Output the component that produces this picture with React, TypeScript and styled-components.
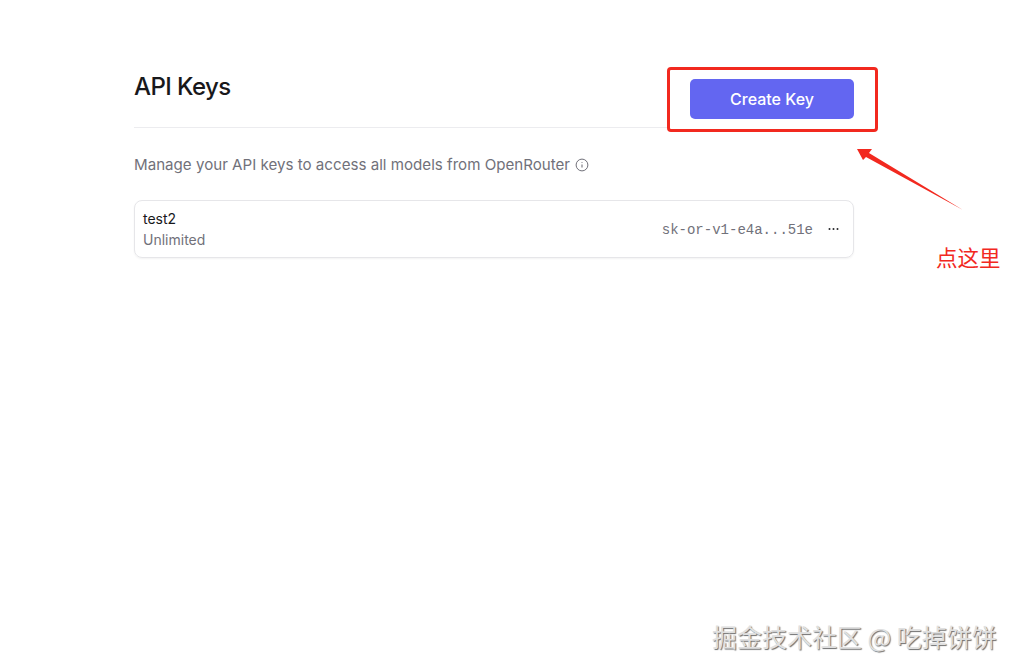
import styled, { createGlobalStyle } from "styled-components";

const GlobalStyle = createGlobalStyle`
  html, body {
    margin: 0;
    padding: 0;
    background: #ffffff;
  }
  body {
    font-family: Inter, "Noto Sans CJK SC", sans-serif;
    color: #18181b;
  }
`;

const Page = styled.div`
  position: relative;
  width: 1017px;
  height: 671px;
  overflow: hidden;
  padding: 79px 0 0 134px;
  box-sizing: border-box;
`;

const Content = styled.main`
  width: 720px;
`;

const Header = styled.header`
  display: flex;
  justify-content: space-between;
  align-items: flex-start;
  height: 48px;
`;

const Title = styled.h1`
  margin: 0;
  font-size: 24px;
  line-height: 16px;
  font-weight: 500;
  letter-spacing: -0.6px;
  color: #18181b;
`;

const CreateButton = styled.button`
  width: 164px;
  height: 40px;
  border: 0;
  border-radius: 5px;
  background: #6366f1;
  color: #ffffff;
  font-family: inherit;
  font-size: 16px;
  font-weight: 500;
`;

const Divider = styled.div`
  width: 533px;
  height: 1px;
  background: #ececef;
`;

const Description = styled.p`
  display: flex;
  align-items: center;
  gap: 5px;
  margin: 27px 0 0;
  font-size: 15.14px;
  line-height: 20px;
  color: #71717a;
`;

const KeyRow = styled.div`
  display: flex;
  justify-content: space-between;
  align-items: center;
  height: 58px;
  margin-top: 25px;
  padding: 0 14px 0 8px;
  box-sizing: border-box;
  border: 1px solid #e6e6e9;
  border-radius: 8px;
  box-shadow: 0 1px 2px rgba(0, 0, 0, 0.05);
`;

const KeyInfo = styled.div`
  display: flex;
  flex-direction: column;
  gap: 3px;
  padding-top: 1px;
`;

const KeyName = styled.div`
  font-size: 14px;
  line-height: 18px;
  color: #18181b;
`;

const KeyLimit = styled.div`
  font-size: 14px;
  line-height: 18px;
  color: #71717a;
`;

const KeyActions = styled.div`
  display: flex;
  align-items: center;
  gap: 15px;
`;

const KeyValue = styled.code`
  padding-top: 1px;
  font-family: "Liberation Mono", monospace;
  font-size: 14px;
  color: #71717a;
`;

const MoreIcon = styled.svg`
  display: block;
`;

const HighlightBox = styled.div`
  position: absolute;
  left: 667px;
  top: 67px;
  width: 211px;
  height: 65px;
  box-sizing: border-box;
  border: 3px solid #f2291f;
  border-radius: 4px;
`;

const ArrowDrawing = styled.svg`
  position: absolute;
  left: 850px;
  top: 140px;
`;

const Annotation = styled.div`
  position: absolute;
  left: 936px;
  top: 243px;
  font-family: "Noto Sans CJK SC", sans-serif;
  font-size: 21.5px;
  line-height: 28px;
  color: #f2291f;
`;

const Watermark = styled.div`
  position: absolute;
  left: 712px;
  top: 619px;
  font-family: "Noto Sans CJK SC", sans-serif;
  font-size: 25px;
  line-height: 34px;
  white-space: nowrap;
  color: #e0e0e0;
  text-shadow: 1px 1px 1px #6d6d6d;
`;

export default function App() {
  return (
    <Page>
      <GlobalStyle />
      <Content>
        <Header>
          <Title>API Keys</Title>
          <CreateButton type="button">Create Key</CreateButton>
        </Header>
        <Divider />
        <Description>
          Manage your API keys to access all models from OpenRouter
          <svg width="14" height="14" viewBox="0 0 14 14" fill="none" stroke="#71717a">
            <circle cx="7" cy="7" r="5.9" strokeWidth="1" />
            <path d="M7 6.4v3.2M7 4.2v.9" strokeWidth="1.1" />
          </svg>
        </Description>
        <KeyRow>
          <KeyInfo>
            <KeyName>test2</KeyName>
            <KeyLimit>Unlimited</KeyLimit>
          </KeyInfo>
          <KeyActions>
            <KeyValue>sk-or-v1-e4a...51e</KeyValue>
            <MoreIcon width="11" height="4" viewBox="0 0 11 4" fill="#27272a">
              <circle cx="1.5" cy="2" r="1" />
              <circle cx="5.5" cy="2" r="1" />
              <circle cx="9.5" cy="2" r="1" />
            </MoreIcon>
          </KeyActions>
        </KeyRow>
      </Content>
      <HighlightBox />
      <ArrowDrawing width="120" height="75" viewBox="0 0 120 75">
        <path d="M7 9 L22 9 L19 13 L113 70 L16 17 L13 20 Z" fill="#f2291f" />
      </ArrowDrawing>
      <Annotation>点这里</Annotation>
      <Watermark>掘金技术社区 @ 吃掉饼饼</Watermark>
    </Page>
  );
}
